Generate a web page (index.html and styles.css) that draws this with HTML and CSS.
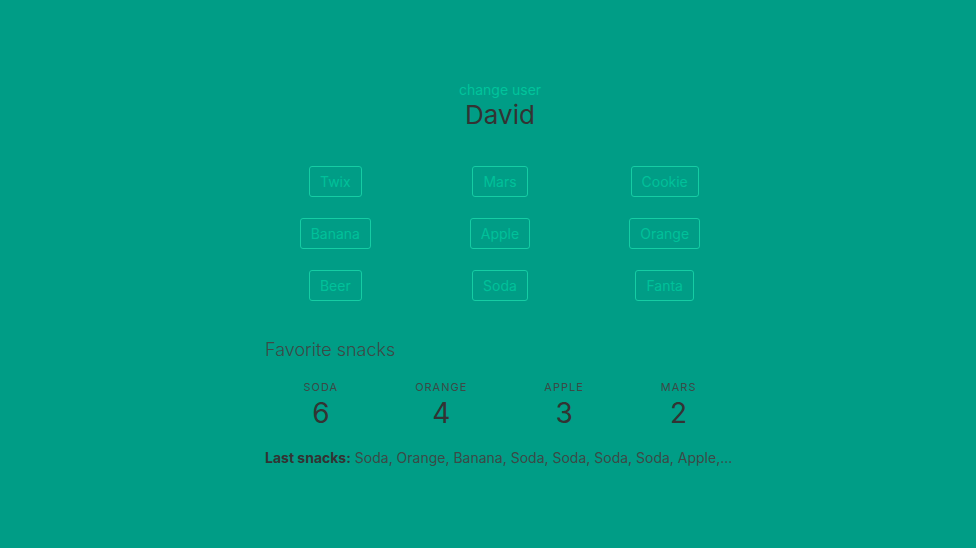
FILE: index.html
```html
<!DOCTYPE html>
<html>
<head>
<meta charset="utf-8">
<link rel="stylesheet" href="styles.css">
</head>
<body>
<main class="app">
  <header class="user">
    <a class="change-user">change user</a>
    <h1 class="user-name">David</h1>
  </header>
  <section class="snack-grid">
    <div class="cell"><button class="snack">Twix</button></div>
    <div class="cell"><button class="snack">Mars</button></div>
    <div class="cell"><button class="snack">Cookie</button></div>
    <div class="cell"><button class="snack">Banana</button></div>
    <div class="cell"><button class="snack">Apple</button></div>
    <div class="cell"><button class="snack">Orange</button></div>
    <div class="cell"><button class="snack">Beer</button></div>
    <div class="cell"><button class="snack">Soda</button></div>
    <div class="cell"><button class="snack">Fanta</button></div>
  </section>
  <section class="favorites">
    <h2 class="fav-title">Favorite snacks</h2>
    <div class="level">
      <div class="level-item"><p class="heading">Soda</p><p class="count">6</p></div>
      <div class="level-item"><p class="heading">Orange</p><p class="count">4</p></div>
      <div class="level-item"><p class="heading">Apple</p><p class="count">3</p></div>
      <div class="level-item"><p class="heading">Mars</p><p class="count">2</p></div>
    </div>
    <p class="last"><strong>Last snacks:</strong> Soda, Orange, Banana, Soda, Soda, Soda, Soda, Apple,...</p>
  </section>
</main>
</body>
</html>
```

FILE: styles.css
```css
* { box-sizing: border-box; }
html, body { margin: 0; padding: 0; }
body {
  background: #009d86;
  font-family: Inter, Roboto, "Noto Sans", sans-serif;
  color: #363636;
  min-height: 548px;
}
.app {
  width: 470px;
  margin-left: 265px;
  padding-top: 80px;
}
.user { text-align: center; }
.change-user {
  display: block;
  font-size: 14px;
  line-height: 20px;
  color: #00c49c;
}
.user-name {
  margin: 0;
  font-size: 26px;
  font-weight: 400;
  line-height: 30px;
  color: #333333;
}
.snack-grid {
  display: grid;
  grid-template-columns: repeat(3, 1fr);
  margin: 36px -12px 0;
  row-gap: 21px;
}
.cell { text-align: center; }
.snack {
  height: 31px;
  padding: 0 10px 1px;
  background: transparent;
  border: 1px solid #16cda4;
  border-radius: 3px;
  color: #00c19a;
  font-family: inherit;
  font-size: 14px;
}
.favorites { margin-top: 37px; }
.fav-title {
  margin: 0;
  font-size: 18px;
  font-weight: 300;
  line-height: 24px;
  color: #3c4a46;
}
.level {
  display: flex;
  justify-content: space-around;
  margin-top: 18px;
}
.level-item { text-align: center; }
.heading {
  margin: 0;
  font-size: 11px;
  line-height: 14px;
  letter-spacing: 1px;
  text-transform: uppercase;
  color: #3c4a46;
}
.count {
  margin: 2px 0 0;
  font-size: 28px;
  font-weight: 400;
  line-height: 34px;
  color: #333333;
}
.last {
  margin: 18px 0 0;
  font-size: 14px;
  line-height: 20px;
  color: #3c4a46;
  white-space: nowrap;
}
.last strong { color: #333333; }
```
